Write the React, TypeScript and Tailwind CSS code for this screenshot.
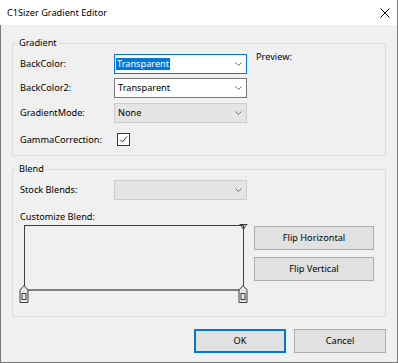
import React from "react";

function Chevron() {
  return (
    <svg width="7" height="4" viewBox="0 0 7 4" className="shrink-0">
      <path d="M0.5 0.5 L3.5 3.5 L6.5 0.5" fill="none" stroke="#707070" strokeWidth="1" />
    </svg>
  );
}

function Marker() {
  return (
    <svg width="10" height="18" viewBox="0 0 10 18">
      <path d="M5 0.5 L9 5 V17.5 H1 V5 Z" fill="#e6e6e6" stroke="#404040" strokeWidth="1" />
      <rect x="3" y="8.5" width="4" height="6" fill="none" stroke="#404040" strokeWidth="1" />
    </svg>
  );
}

function TopMarker() {
  return (
    <svg width="9" height="7" viewBox="0 0 9 7">
      <path d="M0.5 0.5 H8.5 M1.5 0.5 L4.5 5.5 L7.5 0.5" fill="none" stroke="#404040" strokeWidth="1" />
    </svg>
  );
}

export default function App() {
  return (
    <div className="w-[398px] h-[363px] bg-[#f0f0f0] font-['Noto_Sans',sans-serif] text-[9.2px] text-black flex flex-col">
      <div className="h-[25px] bg-white border-r border-[#7a7a7a] flex items-center justify-between pl-[7px] pr-[7px] shrink-0">
        <span className="text-[9.2px] leading-[14px]">C1Sizer Gradient Editor</span>
        <svg width="10" height="10" viewBox="0 0 10 10">
          <path d="M0.5 0.5 L9.5 9.5 M9.5 0.5 L0.5 9.5" stroke="#000" strokeWidth="1" />
        </svg>
      </div>
      <div className="flex-1 border-l border-r border-b border-[#7a7a7a] flex flex-col">
        {/* Gradient group */}
        <div className="relative mt-[18px] mx-[11px] h-[113px] border border-[#dcdcdc] pt-[10px] pl-[7px] flex">
          <span className="absolute left-[5px] top-[-8px] px-[1px] bg-[#f0f0f0] leading-[14px]">Gradient</span>
          <div className="flex flex-col">
            <div className="flex items-center h-[20px]">
              <span className="w-[94px] leading-[14px]">BackColor:</span>
              <div className="w-[133px] h-[20px] border border-[#0078d7] bg-white flex items-center justify-between pl-[1px] pr-[4px]">
                <span className="bg-[#0078d7] text-white leading-[12px] px-[1px]">Transparent</span>
                <Chevron />
              </div>
            </div>
            <div className="flex items-center h-[20px] mt-[4px]">
              <span className="w-[94px] leading-[14px]">BackColor2:</span>
              <div className="w-[133px] h-[20px] border border-[#7a7a7a] bg-white flex items-center justify-between pl-[2px] pr-[4px]">
                <span className="leading-[12px] px-[1px]">Transparent</span>
                <Chevron />
              </div>
            </div>
            <div className="flex items-center h-[20px] mt-[5px]">
              <span className="w-[94px] leading-[14px]">GradientMode:</span>
              <div className="w-[133px] h-[20px] border border-[#cccccc] bg-[#e5e5e5] flex items-center justify-between pl-[2px] pr-[4px]">
                <span className="leading-[12px] px-[1px]">None</span>
                <Chevron />
              </div>
            </div>
            <div className="flex items-center h-[13px] mt-[10px]">
              <span className="w-[94px] leading-[14px]">GammaCorrection:</span>
              <div className="ml-[3px] w-[13px] h-[13px] border border-[#333333] bg-white flex items-center justify-center">
                <svg width="9" height="9" viewBox="0 0 9 9">
                  <path d="M1 4.5 L3.5 7 L8 1.5" fill="none" stroke="#333" strokeWidth="1" />
                </svg>
              </div>
            </div>
          </div>
          <span className="ml-[9px] mt-[-4px] leading-[14px]">Preview:</span>
        </div>

        {/* Blend group */}
        <div className="relative mt-[13px] mx-[11px] h-[148px] border border-[#dcdcdc] pt-[10px] pl-[7px] flex flex-col">
          <span className="absolute left-[5px] top-[-8px] px-[1px] bg-[#f0f0f0] leading-[14px]">Blend</span>
          <div className="flex items-center h-[20px]">
            <span className="w-[94px] leading-[14px]">Stock Blends:</span>
            <div className="w-[133px] h-[20px] border border-[#cccccc] bg-[#e5e5e5] flex items-center justify-end pr-[4px]">
              <Chevron />
            </div>
          </div>
          <span className="mt-[10px] leading-[14px]">Customize Blend:</span>
          <div className="flex mt-[1px]">
            <div className="relative ml-[4px] w-[220px] h-[78px]">
              <div className="h-[66px] border-t border-l border-r border-[#404040] border-b-2 border-b-[#808080]" />
              <div className="absolute left-[215px] top-[-1px]">
                <TopMarker />
              </div>
              <div className="absolute left-[-5px] top-[60px]">
                <Marker />
              </div>
              <div className="absolute left-[214px] top-[60px]">
                <Marker />
              </div>
            </div>
            <div className="ml-[10px] mt-[1px] flex flex-col gap-[7px]">
              <button className="w-[120px] h-[24px] bg-[#e1e1e1] border border-[#adadad] leading-[14px]">Flip Horizontal</button>
              <button className="w-[120px] h-[24px] bg-[#e1e1e1] border border-[#adadad] leading-[14px]">Flip Vertical</button>
            </div>
          </div>
        </div>

        {/* Bottom buttons */}
        <div className="mt-[12px] mr-[11px] flex justify-end gap-[8px]">
          <button className="w-[92px] h-[24px] bg-[#e1e1e1] border-2 border-[#0078d7] leading-[14px]">OK</button>
          <button className="w-[92px] h-[24px] bg-[#e1e1e1] border border-[#adadad] leading-[14px]">Cancel</button>
        </div>
      </div>
    </div>
  );
}
